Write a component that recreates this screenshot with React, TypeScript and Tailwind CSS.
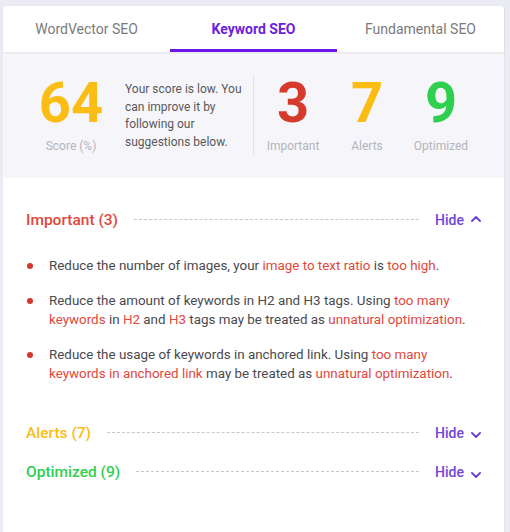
import { ChevronUp, ChevronDown } from 'lucide-react';

const red = 'text-[#e2473b]';

function Hl({ children }: { children: React.ReactNode }) {
  return <span className={red}>{children}</span>;
}

function SectionHeader({
  title,
  color,
  open,
}: {
  title: string;
  color: string;
  open?: boolean;
}) {
  return (
    <div className="flex items-center">
      <span className={`text-[15.5px] font-medium ${color}`}>{title}</span>
      <div className="flex-1 ml-[16px] mr-[16px] border-t border-dashed border-[#c8c8cc] mt-[-2px]"></div>
      <button className="flex items-center text-[14px] font-medium text-[#7045d8]">
        Hide
        {open ? (
          <ChevronUp className="ml-[4px] h-[16px] w-[16px] mt-[-3px]" strokeWidth={3} />
        ) : (
          <ChevronDown className="ml-[4px] h-[16px] w-[16px] mt-[4px]" strokeWidth={3} />
        )}
      </button>
    </div>
  );
}

function Stat({ value, label, color }: { value: string; label: string; color: string }) {
  return (
    <div className="w-[74px] flex flex-col items-center">
      <span className={`text-[56px] font-bold leading-[56px] ${color}`}>{value}</span>
      <span className="mt-[6px] text-[12px] text-[#b4b4bb]">{label}</span>
    </div>
  );
}

function Bullet({ children }: { children: React.ReactNode }) {
  return (
    <li className="flex">
      <span className="mt-[7px] ml-[1px] mr-[16px] h-[6px] w-[6px] rounded-full bg-[#d9352a] shrink-0"></span>
      <span>{children}</span>
    </li>
  );
}

export default function App() {
  return (
    <div
      className="min-h-[532px] bg-[#ebebf4] pt-[6px] pl-[3px] pr-[5px]"
      style={{ fontFamily: 'Roboto, "Noto Sans", sans-serif' }}
    >
      <div className="bg-white rounded-t-[4px] min-h-[526px] border-r border-[#e4e4ec]">
        {/* Tabs */}
        <div className="flex h-[46px] relative z-10 shadow-[0_1px_2px_rgba(0,0,0,0.08)]">
          <div className="flex-1 flex items-center justify-center text-[14px] text-[#7a7a7e] pt-[1px]">
            WordVector SEO
          </div>
          <div className="flex-1 flex items-center justify-center text-[14px] font-bold text-[#6a22dc] border-b-[3px] border-[#6a18e6] pt-[4px]">
            Keyword SEO
          </div>
          <div className="flex-1 flex items-center justify-center text-[14px] text-[#7a7a7e] pt-[1px]">
            Fundamental SEO
          </div>
        </div>

        {/* Score summary */}
        <div className="bg-[#f6f6fa] h-[126px] flex items-center pl-[28px]">
          <div className="w-[80px] flex flex-col items-center">
            <span className="text-[56px] font-bold leading-[56px] text-[#fbbd14]">64</span>
            <span className="mt-[6px] text-[12px] text-[#b4b4bb]">Score (%)</span>
          </div>
          <p className="ml-[14px] w-[118px] text-[12px] leading-[17.5px] text-[#58585c] mt-[2px]">
            Your score is low. You can improve it by following our suggestions below.
          </p>
          <div className="ml-[10px] w-px h-[80px] bg-[#e2e2e8]"></div>
          <div className="ml-[2px] flex">
            <Stat value="3" label="Important" color="text-[#d63a2b]" />
            <Stat value="7" label="Alerts" color="text-[#fbbd14]" />
            <Stat value="9" label="Optimized" color="text-[#2fcf4f]" />
          </div>
        </div>

        {/* Sections */}
        <div className="pl-[23px] pr-[20px] pt-[31px]">
          <SectionHeader title="Important (3)" color="text-[#e2473b]" open />

          <ul className="mt-[24px] flex flex-col gap-[15px] text-[13.4px] leading-[19.5px] text-[#4a4a4e]">
            <Bullet>
              Reduce the number of images, your <Hl>image to text ratio</Hl> is <Hl>too high</Hl>.
            </Bullet>
            <Bullet>
              Reduce the amount of keywords in H2 and H3 tags. Using <Hl>too many keywords</Hl> in{' '}
              <Hl>H2</Hl> and <Hl>H3</Hl> tags may be treated as <Hl>unnatural optimization</Hl>.
            </Bullet>
            <Bullet>
              Reduce the usage of keywords in anchored link. Using{' '}
              <Hl>too many keywords in anchored link</Hl> may be treated as{' '}
              <Hl>unnatural optimization</Hl>.
            </Bullet>
          </ul>

          <div className="mt-[38px]">
            <SectionHeader title="Alerts (7)" color="text-[#fbbd14]" />
          </div>
          <div className="mt-[16px]">
            <SectionHeader title="Optimized (9)" color="text-[#2fcf4f]" />
          </div>
        </div>
      </div>
    </div>
  );
}
